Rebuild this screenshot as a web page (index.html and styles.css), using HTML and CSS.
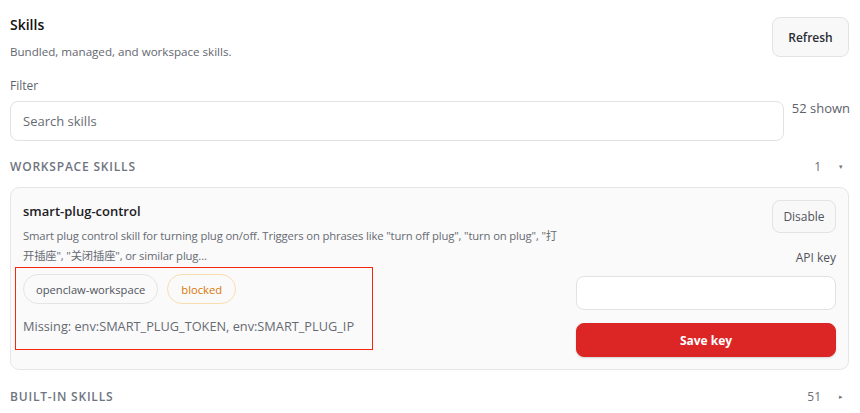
FILE: index.html
```html
<!DOCTYPE html>
<html lang="en">
<head>
<meta charset="utf-8">
<title>Skills</title>
<link rel="stylesheet" href="styles.css">
</head>
<body>
<div class="page">
  <header class="head">
    <div class="head-text">
      <div class="title">Skills</div>
      <div class="sub">Bundled, managed, and workspace skills.</div>
    </div>
    <button class="btn btn-refresh">Refresh</button>
  </header>

  <div class="filter">
    <label class="label">Filter</label>
    <div class="filter-row">
      <input class="input search" placeholder="Search skills">
      <span class="shown">52 shown</span>
    </div>
  </div>

  <div class="section-head">
    <span class="section-title">Workspace skills</span>
    <span class="section-meta"><span class="count">1</span><span class="caret">▾</span></span>
  </div>

  <div class="card">
    <div class="card-main">
      <div class="skill-name">smart-plug-control</div>
      <div class="desc">Smart plug control skill for turning plug on/off. Triggers on phrases like "turn off plug", "turn on plug", "打开插座", "关闭插座", or similar plug...</div>
      <div class="highlight">
        <div class="chips">
          <span class="chip">openclaw-workspace</span>
          <span class="chip chip-warn">blocked</span>
        </div>
        <div class="missing">Missing: env:SMART_PLUG_TOKEN, env:SMART_PLUG_IP</div>
      </div>
    </div>
    <div class="card-side">
      <button class="btn btn-disable">Disable</button>
      <div class="key-label">API key</div>
      <input class="input key-input" type="password">
      <button class="btn btn-save">Save key</button>
    </div>
  </div>

  <div class="section-head section-built">
    <span class="section-title">Built-in skills</span>
    <span class="section-meta"><span class="count">51</span><span class="caret">▸</span></span>
  </div>
</div>
</body>
</html>
```

FILE: styles.css
```css
* { box-sizing: border-box; }
html, body { margin: 0; padding: 0; background: #ffffff; }
body {
  font-family: "Open Sans", "Noto Sans CJK SC", sans-serif;
  font-size: 12px;
  color: #1f2329;
}
.page { padding: 15px 11px 0 10px; }

.head { display: flex; justify-content: space-between; align-items: flex-start; }
.title { font-size: 14px; font-weight: 600; line-height: 20px; color: #111; }
.sub { margin-top: 8px; font-size: 11.6px; line-height: 18px; color: #636770; }

.btn {
  font-family: inherit;
  font-size: 12px;
  border: 1px solid #e3e3e3;
  background: #f8f8f8;
  border-radius: 8px;
  color: #2a2d33;
  cursor: pointer;
}
.btn-refresh { margin-top: 2px; width: 77px; height: 40px; font-weight: 600; }

.filter { margin-top: 16px; }
.label { display: block; line-height: 18px; color: #5d626b; }
.filter-row { display: flex; align-items: flex-start; gap: 8px; margin-top: 6px; }
.input {
  font-family: inherit;
  font-size: 13px;
  border: 1px solid #e2e2e2;
  border-radius: 8px;
  background: #fff;
  outline: none;
}
.search { flex: 1; height: 40px; padding: 0 12px; color: #333; }
.search::placeholder { color: #666b73; }
.shown { font-size: 13px; line-height: 14px; color: #5d626b; margin-right: -1px; }

.section-head {
  display: flex; justify-content: space-between; align-items: center;
  margin-top: 17px; line-height: 18px;
}
.section-title {
  text-transform: uppercase; font-weight: 600; letter-spacing: 0.8px; color: #6f7480;
}
.section-meta { display: flex; align-items: center; color: #6a6f78; font-weight: 500; }
.caret { font-size: 7px; width: 12px; margin-left: 14px; margin-right: 2px; text-align: center; color: #777; }

.card {
  display: flex; gap: 16px;
  margin-top: 11px;
  padding: 12px;
  border: 1px solid #e6e6e6;
  border-radius: 9px;
  background: #fafafa;
}
.card-main { flex: 1; min-width: 0; }
.skill-name { font-size: 13px; font-weight: 600; line-height: 22px; color: #1d2025; }
.desc { margin-top: 4px; font-size: 11.3px; letter-spacing: -0.15px; line-height: 20px; color: #666a73; }
.highlight {
  margin: 1px 0 0 -8px;
  width: 358px;
  padding: 6px 0 13px 7px;
  border: 1px solid #f5260c;
}
.chips { display: flex; gap: 9px; }
.chip {
  display: inline-flex; align-items: center;
  height: 30px; padding: 0 12px;
  font-size: 11.2px;
  border: 1px solid #e4e4e4; border-radius: 15px;
  color: #50545c; font-weight: 500;
}
.chip-warn { color: #d97706; border-color: #fbdcae; padding: 0 13px; }
.missing { margin-top: 12px; line-height: 20px; color: #666a73; font-size: 12.75px; }

.card-side { width: 260px; display: flex; flex-direction: column; align-items: flex-end; }
.btn-disable { width: 64px; height: 33px; color: #50545c; font-weight: 500; }
.key-label { margin-top: 16px; line-height: 18px; color: #50545c; }
.key-input { margin-top: 9px; width: 100%; height: 34px; }
.btn-save {
  margin-top: 13px; width: 100%; height: 34px;
  background: #dc2626; border-color: #dc2626; color: #fff; font-weight: 700;
  box-shadow: 0 1px 2px rgba(0,0,0,0.15);
}

.section-built { margin-top: 18px; }
```
